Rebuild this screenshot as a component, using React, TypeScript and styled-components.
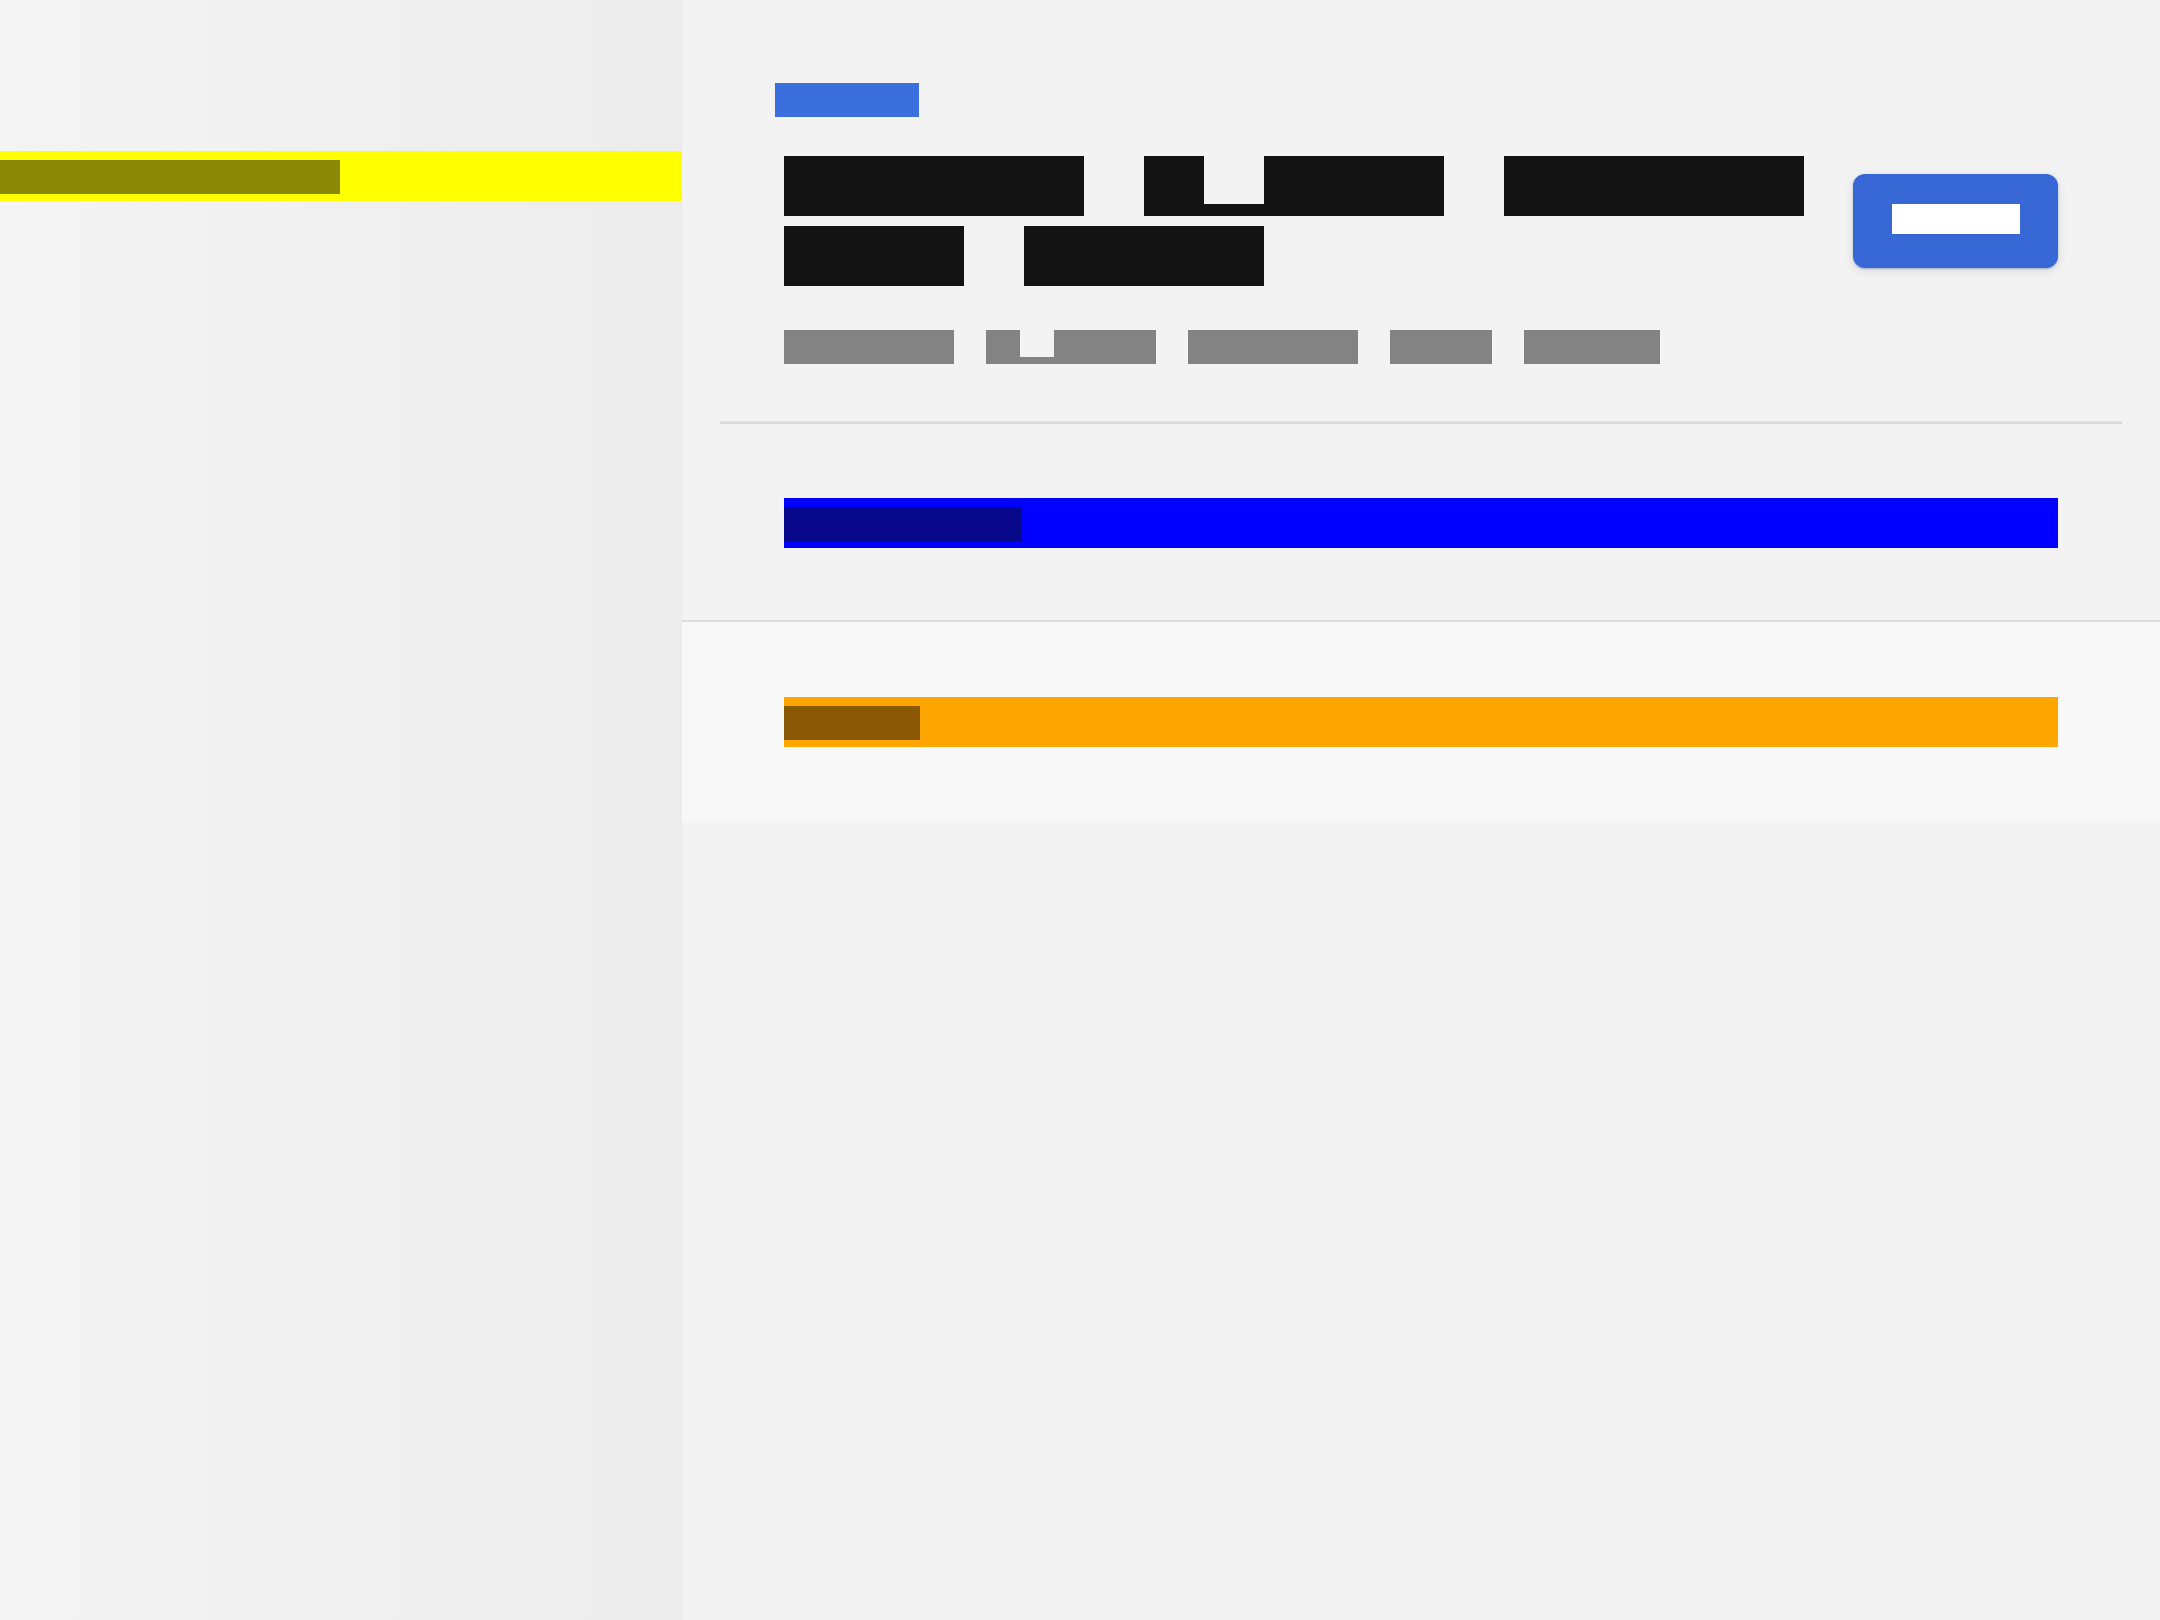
import React from 'react';
import styled, { createGlobalStyle } from 'styled-components';

const GlobalStyle = createGlobalStyle`
  html, body {
    margin: 0;
    padding: 0;
  }
  body {
    background: #f3f3f3;
    font-family: 'Liberation Mono', 'DejaVu Sans Mono', monospace;
  }
`;

// block glyphs: every character is a solid cell, "p" only fills its descent
const Word = styled.span`
  display: inline-flex;
  white-space: nowrap;
`;

const Glyph = styled.span<{ $size: number; $advance: number; $ink: string; $kind: 'full' | 'desc' | 'asc' }>`
  display: inline-block;
  width: ${p => p.$advance}px;
  height: ${p => p.$size}px;
  overflow: hidden;
  color: transparent;
  font-size: ${p => Math.round(p.$size * 0.7)}px;
  line-height: ${p => p.$size}px;
  text-align: center;
  background: ${p =>
    p.$kind === 'desc'
      ? `linear-gradient(to bottom, transparent 80%, ${p.$ink} 80%)`
      : p.$kind === 'asc'
      ? `linear-gradient(to bottom, ${p.$ink} 80%, transparent 80%)`
      : p.$ink};
`;

type BlocksProps = { text: string; size: number; advance?: number; ink: string };

const Blocks = ({ text, size, advance, ink }: BlocksProps) => (
  <Word>
    {Array.from(text).map((ch, i) => (
      <Glyph
        key={i}
        $size={size}
        $advance={advance ?? size}
        $ink={ink}
        $kind={ch === 'p' ? 'desc' : ch === 'É' ? 'asc' : 'full'}
      >
        {ch}
      </Glyph>
    ))}
  </Word>
);

const Layout = styled.div`
  display: flex;
  min-height: 100vh;
`;

const Sidebar = styled.aside`
  width: 682px;
  flex-shrink: 0;
  padding-top: 151px;
  box-sizing: border-box;
  background: linear-gradient(to right, #f4f4f4, #ececec);
`;

const Bar = styled.div<{ $bg: string }>`
  display: flex;
  align-items: flex-start;
  height: 50px;
  box-sizing: border-box;
  padding-top: 9px;
  background: ${p => p.$bg};
`;

const Main = styled.main`
  flex: 1;
  min-width: 0;
`;

const Header = styled.header`
  padding: 0 38px;
`;

const HeaderInner = styled.div`
  padding: 83px 64px 0;
`;

const Tag = styled.div`
  display: flex;
  margin-left: -9px;
`;

const TitleRow = styled.div`
  display: flex;
  align-items: center;
  gap: 32px;
  margin-top: 39px;
`;

const Title = styled.h1`
  flex: 1;
  margin: 0;
  display: flex;
  flex-wrap: wrap;
  column-gap: 60px;
  row-gap: 10px;
`;

const Button = styled.button`
  flex-shrink: 0;
  width: 205px;
  height: 94px;
  padding: 0 0 4px;
  border: 0;
  border-radius: 12px;
  background: #3768d6;
  box-shadow: 0 1px 2px rgba(40, 70, 150, 0.35), 0 3px 12px rgba(0, 0, 0, 0.1);
  display: flex;
  align-items: center;
  justify-content: center;
  cursor: pointer;
  font-family: inherit;
`;

const Meta = styled.div`
  display: flex;
  gap: 32px;
  margin-top: 44px;
`;

const Divider = styled.div`
  margin-top: 57px;
  height: 1px;
  background: #e2e2e2;
  border-bottom: 2px solid #d9d9d9;
`;

const Content = styled.section`
  padding: 74px 102px 72px;
`;

const Section = styled.section`
  border-top: 2px solid #dcdcdc;
  background: #f8f8f8;
  padding: 75px 102px 74px;
`;

const title = 'Every spend tells its tale';
const meta = ['Draft', 'Spend', 'Audit', 'Tax', '2024'];

const App = () => {
  return (
    <Layout>
      <GlobalStyle />
      <Sidebar>
        <Bar $bg='#ffff00'>
          <Blocks text='Highlights' size={34} ink='#8a8a08' />
        </Bar>
      </Sidebar>
      <Main>
        <Header>
          <HeaderInner>
            <Tag>
              <Blocks text='News' size={34} advance={36} ink='#3b6fdd' />
            </Tag>
            <TitleRow>
              <Title>
                {title.split(' ').map((w, i) => (
                  <Blocks key={i} text={w} size={60} ink='#131313' />
                ))}
              </Title>
              <Button>
                <Blocks text='Save' size={30} advance={32} ink='#ffffff' />
              </Button>
            </TitleRow>
            <Meta>
              {meta.map((m, i) => (
                <Blocks key={i} text={m} size={34} ink='#838383' />
              ))}
            </Meta>
          </HeaderInner>
          <Divider />
        </Header>
        <Content>
          <Bar $bg='#0000ff'>
            <Blocks text='Summary' size={34} ink='#08088a' />
          </Bar>
        </Content>
        <Section>
          <Bar $bg='#ffa500'>
            <Blocks text='Note' size={34} ink='#8a5905' />
          </Bar>
        </Section>
      </Main>
    </Layout>
  );
};

export default App;
